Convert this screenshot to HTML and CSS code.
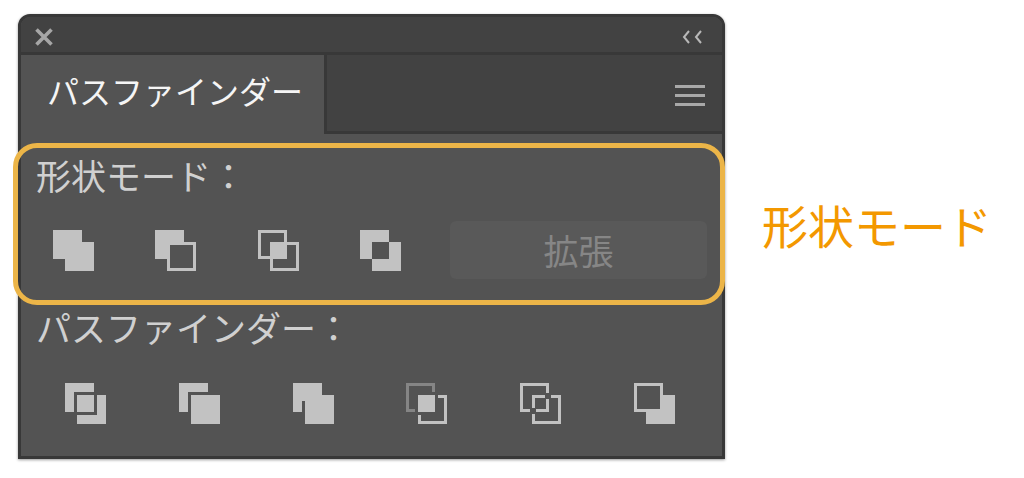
FILE: index.html
```html
<!DOCTYPE html>
<html lang="ja">
<head>
  <meta charset="UTF-8" />
  <meta name="viewport" content="width=device-width, initial-scale=1.0" />
  <title>パスファインダー</title>
  <link rel="stylesheet" href="styles.css">
</head>
<body>
  <main class="figure">
    <div class="panel">
      <div class="titlebar">
        <button class="plain-btn" type="button" aria-label="閉じる">
          <svg width="18" height="18" viewBox="0 0 18 18"><path d="M1.5 1.5 16.5 16.5M16.5 1.5 1.5 16.5" fill="none" stroke="#a6a6a6" stroke-width="3.6"/></svg>
        </button>
        <button class="plain-btn" type="button" aria-label="折りたたむ">
          <svg width="20" height="14" viewBox="0 0 20 14"><path d="M7 1 2 7l5 6M19 1l-5 6 5 6" fill="none" stroke="#b8b8b8" stroke-width="2"/></svg>
        </button>
      </div>

      <div class="tabs">
        <button class="tab" type="button">パスファインダー</button>
        <div class="tabs-rest">
          <button class="plain-btn" type="button" aria-label="メニュー">
            <svg width="30" height="21" viewBox="0 0 30 21"><path d="M0 1.5h30M0 10.5h30M0 19.5h30" stroke="#a8a8a8" stroke-width="3"/></svg>
          </button>
        </div>
      </div>

      <section class="group highlight">
        <h2 class="group-title">形状モード：</h2>
        <div class="modes">
          <button class="icon-btn" type="button" aria-label="合体">
            <svg class="icon" viewBox="0 0 41 41"><path d="M0 0h29v12h12v29H12V29H0z"/></svg>
          </button>
          <button class="icon-btn" type="button" aria-label="前面オブジェクトで型抜き">
            <svg class="icon" viewBox="0 0 41 41"><path fill-rule="evenodd" d="M0 0h29v12h12v29H12V29H0zM15 15v23h23V15z"/></svg>
          </button>
          <button class="icon-btn" type="button" aria-label="交差">
            <svg class="icon" viewBox="0 0 41 41"><path class="line" d="M1.5 1.5h26v26h-26zM13.5 13.5h26v26h-26z"/><path d="M12 12h17v17H12z"/></svg>
          </button>
          <button class="icon-btn" type="button" aria-label="中マド">
            <svg class="icon" viewBox="0 0 41 41"><path fill-rule="evenodd" d="M0 0h29v12h12v29H12V29H0zM12 12v17h17V12z"/></svg>
          </button>
          <button class="expand-btn" type="button" disabled>拡張</button>
        </div>
      </section>

      <section class="group">
        <h2 class="group-title">パスファインダー：</h2>
        <div class="pathfinders">
          <button class="icon-btn" type="button" aria-label="分割">
            <svg class="icon" viewBox="0 0 41 41"><path d="M0 0h29v9H9v20H0zM12 12h17v17H12zM32 12h9v29H12v-9h20z"/></svg>
          </button>
          <button class="icon-btn" type="button" aria-label="刈り込み">
            <svg class="icon" viewBox="0 0 41 41"><path d="M0 0h29v9H9v20H0zM12 12h29v29H12z"/></svg>
          </button>
          <button class="icon-btn" type="button" aria-label="合流">
            <svg class="icon" viewBox="0 0 41 41"><path d="M0 0h29v12h12v29H12V18H9v11H0z"/></svg>
          </button>
          <button class="icon-btn" type="button" aria-label="切り抜き">
            <svg class="icon" viewBox="0 0 41 41"><path class="line dim" d="M27.5 9V1.5h-26v26H9"/><path class="line" d="M32 13.5h7.5v26h-26V32"/><path d="M12 12h17v17H12z"/></svg>
          </button>
          <button class="icon-btn" type="button" aria-label="アウトライン">
            <svg class="icon" viewBox="0 0 41 41"><path class="line" d="M27.5 10V1.5h-26v26H10M25 13.5H13.5V25M16 27.5h11.5V16M31 13.5h8.5v26h-26V31"/></svg>
          </button>
          <button class="icon-btn" type="button" aria-label="背面オブジェクトで型抜き">
            <svg class="icon" viewBox="0 0 41 41"><path fill-rule="evenodd" d="M0 0h29v12h12v29H12V29H0zM3 3v23h23V3z"/></svg>
          </button>
        </div>
      </section>
    </div>

    <p class="note">形状モード</p>
  </main>
</body>
</html>
```

FILE: styles.css
```css
* {
  margin: 0;
  padding: 0;
  box-sizing: border-box;
}
body {
  background: #fff;
  font-family: "Noto Sans CJK JP", sans-serif;
  padding: 14px 0 18px 18px;
}
button {
  font-family: inherit;
  background: none;
  border: none;
}
svg {
  display: block;
}
.figure {
  display: flex;
  align-items: center;
}
.panel {
  flex: 1;
  background: #535353;
  border: 3px solid #383838;
  border-radius: 12px 12px 0 0;
  box-shadow: 0 1px 3px rgba(0, 0, 0, 0.4);
}

/* title bar and tabs */
.titlebar {
  display: flex;
  align-items: center;
  justify-content: space-between;
  height: 38px;
  padding: 4px 20px 0 14px;
  background: #424242;
  border-bottom: 3px solid #383838;
  border-radius: 9px 9px 0 0;
}
.tabs {
  display: flex;
  height: 79px;
}
.tab {
  padding: 0 21px 10px 26px;
  font-size: 32px;
  line-height: 40px;
  font-weight: 400;
  color: #f5f5f5;
}
.tabs-rest {
  flex: 1;
  display: flex;
  align-items: center;
  justify-content: flex-end;
  padding: 4px 17px 0 0;
  background: #424242;
  border: solid #383838;
  border-width: 0 0 3px 3px;
}

/* groups */
.group {
  padding: 0 15px 32px;
}
.group-title {
  font-size: 35px;
  line-height: 44px;
  font-weight: 400;
  color: #d0d0d0;
}
.highlight {
  margin: 9px -3px 0 -8px;
  padding: 5px 13px 21px 18px;
  border: 5px solid #ecb548;
  border-radius: 24px;
}
.modes {
  display: grid;
  grid-template-columns: repeat(3, 1fr) 107px 257px;
  align-items: center;
  padding-top: 24px;
}
.pathfinders {
  display: flex;
  justify-content: space-between;
  padding: 34px 32px 0 29px;
}
.icon-btn {
  justify-self: start;
}
.modes .icon-btn {
  margin-left: 17px;
}
.icon {
  width: 41px;
  height: 41px;
  fill: #c2c2c2;
}
.line {
  fill: none;
  stroke: #c2c2c2;
  stroke-width: 3;
}
.dim {
  stroke: #858585;
}
.expand-btn {
  height: 58px;
  font-size: 35px;
  line-height: 48px;
  color: #868686;
  background: #595959;
  border-radius: 6px;
}

.note {
  padding: 0 32px 26px 37px;
  font-size: 46px;
  line-height: 60px;
  color: #f39800;
  white-space: nowrap;
}
```
